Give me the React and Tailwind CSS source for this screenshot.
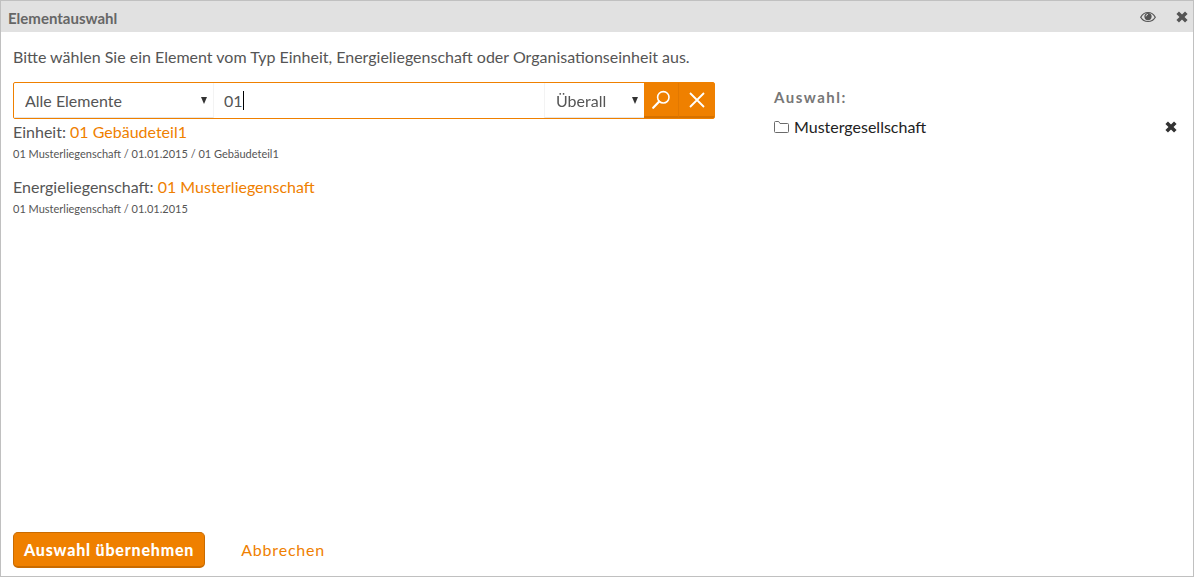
import React, { useState } from "react";

/* ---------- Data ---------- */
const RESULTS = [
    {
        id: 1,
        type: "Einheit",
        name: "01 Gebäudeteil1",
        path: "01 Musterliegenschaft / 01.01.2015 / 01 Gebäudeteil1",
    },
    {
        id: 2,
        type: "Energieliegenschaft",
        name: "01 Musterliegenschaft",
        path: "01 Musterliegenschaft / 01.01.2015",
    },
];

/* ---------- Icons ---------- */
const EyeIcon = () => (
    <svg className="w-4 h-3" viewBox="0 0 16 12" fill="none" stroke="currentColor">
        <path d="M0.7 6.2C2.4 3.2 5 1.5 8 1.5s5.6 1.7 7.3 4.7C13.6 9 11 10.5 8 10.5S2.4 9 0.7 6.2z" strokeWidth="1.2" />
        <circle cx="8" cy="5.6" r="3.6" fill="currentColor" stroke="none" />
        <path d="M6 5.4a2 2 0 0 1 2-2" stroke="#e1e1e1" strokeWidth="0.9" />
    </svg>
);

const CrossIcon = () => (
    <svg className="w-3 h-3" viewBox="0 0 12 12" fill="none" stroke="currentColor" strokeWidth="3.6">
        <path d="M1.7 1.7l8.6 8.6M10.3 1.7l-8.6 8.6" />
    </svg>
);

const SearchIcon = () => (
    <svg className="w-5 h-5" viewBox="0 0 20 20" fill="none" stroke="currentColor" strokeLinecap="round">
        <circle cx="12.3" cy="7.3" r="5.7" strokeWidth="1.6" />
        <path d="M8.2 11.6L2.2 17.8" strokeWidth="2.2" />
    </svg>
);

const ClearIcon = () => (
    <svg className="w-4 h-4" viewBox="0 0 16 16" fill="none" stroke="currentColor" strokeWidth="1.8">
        <path d="M1 1l14 14M15 1L1 15" />
    </svg>
);

const FolderIcon = () => (
    <svg className="w-4 h-3 text-[#6b6b6b]" viewBox="0 0 16 12" fill="none" stroke="currentColor">
        <path d="M0.5 10.5v-9a1 1 0 0 1 1-1h3.2l1.3 2h7.5a1 1 0 0 1 1 1v7a1 1 0 0 1-1 1h-12a1 1 0 0 1-1-1z" />
    </svg>
);

/* ---------- Drop-down ---------- */
const Select = ({ label, options, className }) => (
    <div className={`relative border-b border-b-[#e6e6e6] ${className}`}>
        <select
            aria-label={label}
            className="w-full h-full pl-[11px] pr-6 pt-px appearance-none bg-transparent outline-none"
        >
            {options.map((o) => (
                <option key={o}>{o}</option>
            ))}
        </select>
        <svg className="pointer-events-none absolute right-1.5 top-3.5 w-1.5 h-[7px] text-[#333]" viewBox="0 0 6 7" fill="currentColor">
            <path d="M0 0h6L3 7z" />
        </svg>
    </div>
);

/* ---------- Search bar ---------- */
const SearchBar = () => {
    const [query, setQuery] = useState("01");

    return (
        <form className="flex h-[37px] border border-[#ef8000] rounded-xs" onSubmit={(e) => e.preventDefault()}>
            <Select label="Elementtyp" options={["Alle Elemente"]} className="w-50 border-r border-r-[#f3f3f3]" />
            <div className="relative flex-1 min-w-0">
                <input
                    type="text"
                    aria-label="Suchbegriff"
                    autoFocus
                    value={query}
                    onChange={(e) => setQuery(e.target.value)}
                    className="w-full h-full px-2.5 outline-none caret-transparent"
                />
                {/* Steady caret behind the typed text */}
                <span
                    aria-hidden="true"
                    className="pointer-events-none absolute inset-y-2 left-2.5 w-fit border-r border-black text-transparent whitespace-pre select-none before:content-[attr(data-text)]"
                    data-text={query}
                />
            </div>
            <Select label="Suchbereich" options={["Überall"]} className="w-25 border-l border-l-[#f3f3f3]" />
            <button type="submit" aria-label="Suchen" className="w-[35px] flex items-center justify-center bg-[#ef8000] text-white border-r border-b-2 border-r-[#e27800] border-b-[#d67200]">
                <SearchIcon />
            </button>
            <button
                type="button"
                aria-label="Leeren"
                onClick={() => setQuery("")}
                className="w-[35px] flex items-center justify-center bg-[#ef8000] text-white border-b-2 border-b-[#d67200]"
            >
                <ClearIcon />
            </button>
        </form>
    );
};

export default function App() {
    return (
        <div className="min-h-screen flex flex-col bg-white border border-[#c0c0c0] font-['Lato','Noto_Sans',sans-serif] text-base text-[#555]">
            {/* Header */}
            <header className="flex items-center justify-between h-[31px] pl-[7px] pr-[5px] bg-[#e1e1e1]">
                <h1 className="text-[15px] font-bold text-[#666] pt-1">Elementauswahl</h1>
                <div className="flex items-center gap-5 text-[#555]">
                    <button type="button" aria-label="Ansicht">
                        <EyeIcon />
                    </button>
                    <button type="button" aria-label="Schließen">
                        <CrossIcon />
                    </button>
                </div>
            </header>

            {/* Content */}
            <main className="flex-1 pl-3 pr-2.5 pt-[13px]">
                <p>Bitte wählen Sie ein Element vom Typ Einheit, Energieliegenschaft oder Organisationseinheit aus.</p>

                <div className="flex mt-[13px]">
                    <section className="w-3/5">
                        <SearchBar />
                        <ul className="flex flex-col gap-3 pt-px">
                            {RESULTS.map((r) => (
                                <li key={r.id}>
                                    <div>
                                        {r.type}:{" "}
                                        <a href="#" className="text-[#ef8000]">{r.name}</a>
                                    </div>
                                    <div className="text-[11px] leading-[19px]">{r.path}</div>
                                </li>
                            ))}
                        </ul>
                    </section>

                    {/* Selection */}
                    <section className="flex-1 pl-[59px] pr-1.5 pt-[3px]">
                        <h2 className="text-[15px] leading-6 font-bold tracking-widest text-[#777]">Auswahl:</h2>
                        <div className="flex items-center mt-1.5 text-[#222]">
                            <FolderIcon />
                            <span className="flex-1 pl-1">Mustergesellschaft</span>
                            <button type="button" aria-label="Entfernen" className="text-[#333]">
                                <CrossIcon />
                            </button>
                        </div>
                    </section>
                </div>
            </main>

            {/* Actions */}
            <footer className="flex items-center gap-9 px-3 pb-2">
                <button type="button" className="h-9 px-2.5 rounded-[5px] bg-[#ef8000] border border-b-2 border-[#c96b00] text-base font-black tracking-wider text-white">
                    Auswahl übernehmen
                </button>
                <button type="button" className="h-9 text-base tracking-wider text-[#ef8000]">
                    Abbrechen
                </button>
            </footer>
        </div>
    );
}
